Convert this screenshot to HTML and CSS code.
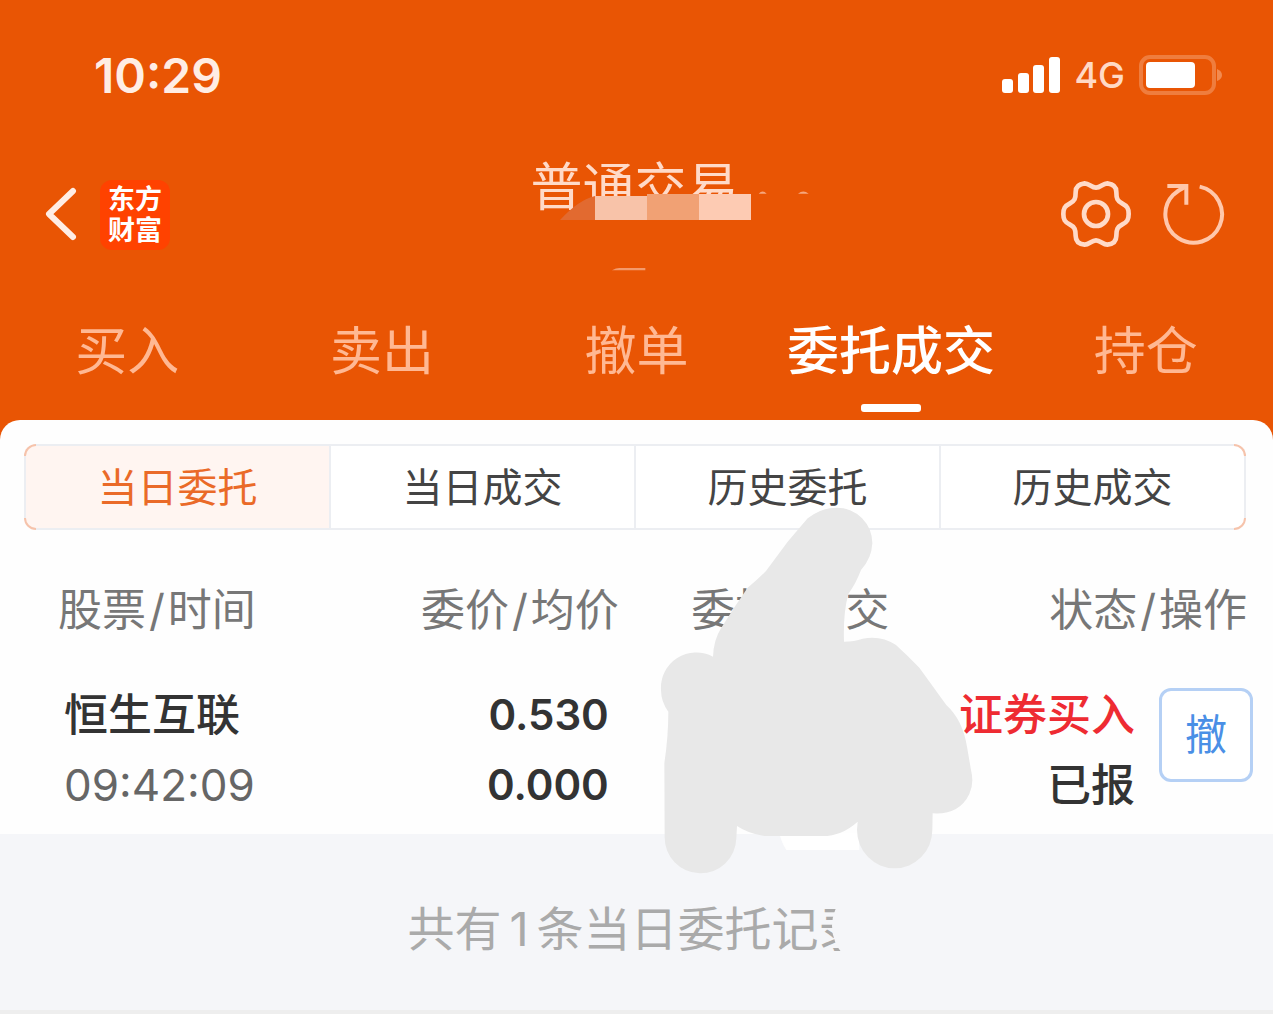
FILE: index.html
```html
<!DOCTYPE html>
<html lang="zh-CN">

<head>
    <meta charset="UTF-8">
    <meta name="viewport" content="width=device-width, initial-scale=1.0">
    <title>普通交易</title>
    <link rel="stylesheet" href="styles.css">
</head>

<body>
    <header class="header">
        <div class="status">
            <span class="time">10:29</span>
            <div class="signal">
                <svg width="58" height="38" viewBox="0 0 58 38" fill="#fff">
                    <rect x="0" y="23" width="11" height="14" rx="3" />
                    <rect x="16" y="17" width="11" height="20" rx="3" />
                    <rect x="31" y="9" width="11" height="28" rx="3" />
                    <rect x="47" y="1" width="11" height="36" rx="3" />
                </svg>
                <span class="net">4G</span>
                <svg width="84" height="40" viewBox="0 0 84 40">
                    <rect x="2" y="2" width="73" height="36" rx="9" fill="none" stroke="#ef7d3e" stroke-width="4" />
                    <rect x="7" y="7" width="49" height="26" rx="4" fill="#fff" />
                    <path d="M78 14 Q83 16 83 20 Q83 24 78 26 Z" fill="#f28a4f" />
                </svg>
            </div>
        </div>

        <div class="nav">
            <div class="nav-left">
                <button class="icon-btn" aria-label="返回">
                    <svg width="34" height="56" viewBox="0 0 34 56" fill="none" stroke="#ffede4" stroke-width="6" stroke-linecap="round" stroke-linejoin="round">
                        <path d="M29 4 L5 27 L29 50" />
                    </svg>
                </button>
                <a href="#" class="logo"><span>东方</span><span>财富</span></a>
            </div>
            <div class="title">
                <h1>普通交易</h1>
                <!-- 账号打码 -->
                <svg class="mosaic" width="330" height="150" viewBox="0 0 990 450">
                    <path d="M180 240 Q235 180 285 168 V240 Z" fill="#e26a30" />
                    <rect x="285" y="168" width="156" height="72" fill="#f8c3a9" />
                    <rect x="441" y="162" width="156" height="78" fill="#f1a174" />
                    <rect x="597" y="162" width="156" height="78" fill="#fdcbb3" />
                    <path d="M776 161 Q788 148 800 161 Z M894 161 Q910 148 926 161 Z" fill="#f6a77e" />
                    <path d="M336 391 Q350 383 360 384 H436 V391 Z" fill="#f49a6c" />
                </svg>
            </div>
            <div class="nav-right">
                <button class="icon-btn" aria-label="设置">
                    <svg width="70" height="70" viewBox="-105 -102 210 210" fill="none" stroke="#ffdac8" stroke-width="14">
                        <path d="M0 -79 C14 -79 20 -92 34 -92 C52 -90 61 -80 61 -66 C61 -46 64 -39 78 -32 C94 -24 98 -16 98 0 C98 16 94 24 78 32 C64 39 61 46 61 66 C61 80 52 90 34 92 C20 92 14 79 0 79 C-14 79 -20 92 -34 92 C-52 90 -61 80 -61 66 C-61 46 -64 39 -78 32 C-94 24 -98 16 -98 0 C-98 -16 -94 -24 -78 -32 C-64 -39 -61 -46 -61 -66 C-61 -80 -52 -90 -34 -92 C-20 -92 -14 -79 0 -79 Z" />
                        <circle r="36" />
                    </svg>
                </button>
                <button class="icon-btn" aria-label="刷新">
                    <svg width="62" height="66" viewBox="-93 -96 186 198" fill="none" stroke="#ffc7ab" stroke-width="12">
                        <path d="M17 -82 A85 85 0 1 1 -62 -58 Q-46 -72 -25 -82" />
                        <path d="M-80 -84 H-23 V-28" />
                    </svg>
                </button>
            </div>
        </div>

        <nav class="tabs">
            <a href="#">买入</a>
            <a href="#">卖出</a>
            <a href="#">撤单</a>
            <a href="#" class="active">委托成交</a>
            <a href="#">持仓</a>
        </nav>
    </header>

    <main class="panel">
        <div class="segment">
            <button class="on">当日委托</button>
            <button>当日成交</button>
            <button>历史委托</button>
            <button>历史成交</button>
        </div>

        <table class="orders">
            <colgroup>
                <col>
                <col class="w-price">
                <col class="w-num">
                <col class="w-state">
                <col class="w-action">
            </colgroup>
            <thead>
                <tr>
                    <th class="c-name">股票<i>/</i>时间</th>
                    <th>委价<i>/</i>均价</th>
                    <th>委托<i>/</i>成交</th>
                    <th class="c-state" colspan="2">状态<i>/</i>操作</th>
                </tr>
            </thead>
            <tbody>
                <tr>
                    <td class="name"><b>恒生互联</b><span>09:42:09</span></td>
                    <td class="price"><b>0.530</b><b>0.000</b></td>
                    <td></td>
                    <td class="state"><b class="buy">证券买入</b><b>已报</b></td>
                    <td class="action"><button class="cancel">撤</button></td>
                </tr>
            </tbody>
        </table>

        <!-- 涂抹遮挡 -->
        <svg class="scribble" width="360" height="400" viewBox="0 0 1080 1200">
            <path fill="#fff" d="M415 1030 H655 V1080 H436 Q422 1060 415 1030 Z" />
            <path fill="#e8e8e8" d="M440 155 L500 85 Q540 53 588 53 A106 106 0 0 1 694 160 Q692 205 660 240 Q645 280 622 312 Q606 370 609 455 Q640 455 665 446 Q720 435 765 465 Q800 497 835 533 Q880 595 916 645 Q965 690 978 770 L990 840 Q1000 880 985 912 Q955 975 875 970 L874 1020 A113 115 0 0 1 648 1020 L650 995 Q600 1040 540 1038 L370 1038 Q320 1030 288 1008 L286 1045 A107 107 0 0 1 71 1040 L70 820 Q82 740 82 665 Q60 635 60 600 A106 106 0 0 1 216 500 Q218 450 240 415 Q280 350 320 293 Q350 268 375 243 Z" />
        </svg>
    </main>

    <footer class="total">
        <p>共有<span>1</span>条当日委托记录<i class="eraser"></i></p>
    </footer>
</body>

</html>
```

FILE: styles.css
```css
* {
    box-sizing: border-box;
    margin: 0;
    padding: 0;
}

body {
    min-height: 100vh;
    display: flex;
    flex-direction: column;
    background: #e95504;
    font-family: Inter, "Noto Sans CJK SC", sans-serif;
    color: #333;
}

a {
    text-decoration: none;
    color: inherit;
}

button {
    font-family: inherit;
    cursor: pointer;
}

svg {
    display: block;
}

/* 状态栏 */
.status {
    height: 150px;
    padding: 0 50px 0 94px;
    display: flex;
    justify-content: space-between;
    align-items: center;
    color: #ffede4;
}

.time {
    font-size: 48px;
    font-weight: 600;
}

.signal {
    display: flex;
    align-items: center;
    gap: 14px;
}

.net {
    font-size: 36px;
    font-weight: 500;
    color: #ffd9c5;
}

/* 导航 */
.nav {
    height: 130px;
    padding: 0 48px 0 44px;
    display: grid;
    grid-template-columns: 1fr auto 1fr;
    align-items: center;
}

.nav-left,
.nav-right {
    display: flex;
    align-items: center;
}

.nav-left {
    gap: 22px;
}

.nav-right {
    justify-content: flex-end;
    gap: 32px;
}

.icon-btn {
    border: none;
    background: none;
}

.logo {
    width: 70px;
    height: 70px;
    display: flex;
    flex-direction: column;
    justify-content: center;
    border-radius: 12px;
    background: #ff4200;
    color: #fff;
    font-size: 27px;
    font-weight: 700;
    line-height: 31px;
    text-align: center;
}

.title {
    position: relative;
    height: 130px;
}

.title h1 {
    font-size: 52px;
    font-weight: 400;
    line-height: 76px;
    color: #ffdac8;
}

.mosaic {
    position: absolute;
    top: -10px;
    left: 50%;
    margin-left: -134px;
}

.tabs {
    height: 140px;
    padding-top: 4px;
    display: grid;
    grid-template-columns: repeat(5, 1fr);
    text-align: center;
    font-size: 52px;
    line-height: 136px;
    color: #ffb893;
}

.tabs .active {
    position: relative;
    font-weight: 500;
    color: #fff;
}

.tabs .active::after {
    content: "";
    position: absolute;
    left: 50%;
    bottom: 8px;
    width: 60px;
    height: 8px;
    margin-left: -30px;
    border-radius: 3px;
    background: #fff;
}

/* 列表 */
.panel {
    position: relative;
    padding: 24px 20px 14px 24px;
    border-radius: 20px 20px 0 0;
    background: #fefefe;
}

/* 四个圆角处的描边为橙色 */
.segment {
    display: grid;
    grid-template-columns: repeat(4, 1fr);
    gap: 2px;
    margin-right: 7px;
    padding: 2px;
    border-radius: 12px;
    background:
        linear-gradient(#f6c3ab, #f6c3ab) 0 0 / 12px 12px no-repeat,
        linear-gradient(#f6c3ab, #f6c3ab) 100% 0 / 12px 12px no-repeat,
        linear-gradient(#f6c3ab, #f6c3ab) 0 100% / 12px 12px no-repeat,
        linear-gradient(#f6c3ab, #f6c3ab) 100% 100% / 12px 12px no-repeat,
        #eceef2;
}

.segment button {
    height: 82px;
    padding-bottom: 4px;
    border: none;
    background: #fff;
    font-size: 40px;
    color: #444;
}

.segment button:first-child {
    border-radius: 10px 0 0 10px;
}

.segment button:last-child {
    border-radius: 0 10px 10px 0;
}

.segment button.on {
    background: #fff5f1;
    color: #ea6a28;
}

.orders {
    width: 100%;
    margin-top: 42px;
    border-collapse: collapse;
    table-layout: fixed;
    font-size: 44px;
    text-align: right;
}

.w-price {
    width: 23%;
}

.w-num {
    width: 22%;
}

.w-state {
    width: 20%;
}

.w-action {
    width: 118px;
}

.orders th {
    height: 70px;
    font-weight: 400;
    color: #777;
}

.orders th i {
    margin: 0 3px;
    font-style: normal;
}

.orders .c-name {
    padding-left: 34px;
    text-align: left;
}

.orders .c-state {
    padding-right: 6px;
}

.orders td {
    padding-top: 38px;
    line-height: 70px;
}

.orders td b,
.orders td span {
    display: block;
    font-weight: 500;
}

.orders .name {
    padding-left: 40px;
    text-align: left;
}

.orders .name span {
    font-weight: 400;
    color: #666;
}

.orders .price {
    padding-right: 10px;
    font-size: 42px;
}

.orders .price b {
    font-weight: 600;
}

.orders .buy {
    color: #ee2b32;
}

.orders .action {
    vertical-align: top;
    padding-top: 46px;
}

.cancel {
    width: 94px;
    height: 94px;
    padding-bottom: 8px;
    border: 3px solid #b5d0f5;
    border-radius: 12px;
    background: #fff;
    font-size: 42px;
    color: #4a8fe6;
}

.scribble {
    position: absolute;
    top: 70px;
    left: 50%;
    margin-left: 4px;
}

.total {
    flex: 1;
    padding-top: 60px;
    border-bottom: 4px solid #eee;
    background: #f5f6f9;
    text-align: center;
    font-size: 47px;
    line-height: 70px;
    color: #aaa;
}

.total p {
    position: relative;
    display: inline-block;
}

.total span {
    margin: 0 8px;
}

.eraser {
    position: absolute;
    top: -10px;
    right: -50px;
    width: 84px;
    height: 84px;
    border-radius: 50%;
    background: #f5f6f9;
}
```
